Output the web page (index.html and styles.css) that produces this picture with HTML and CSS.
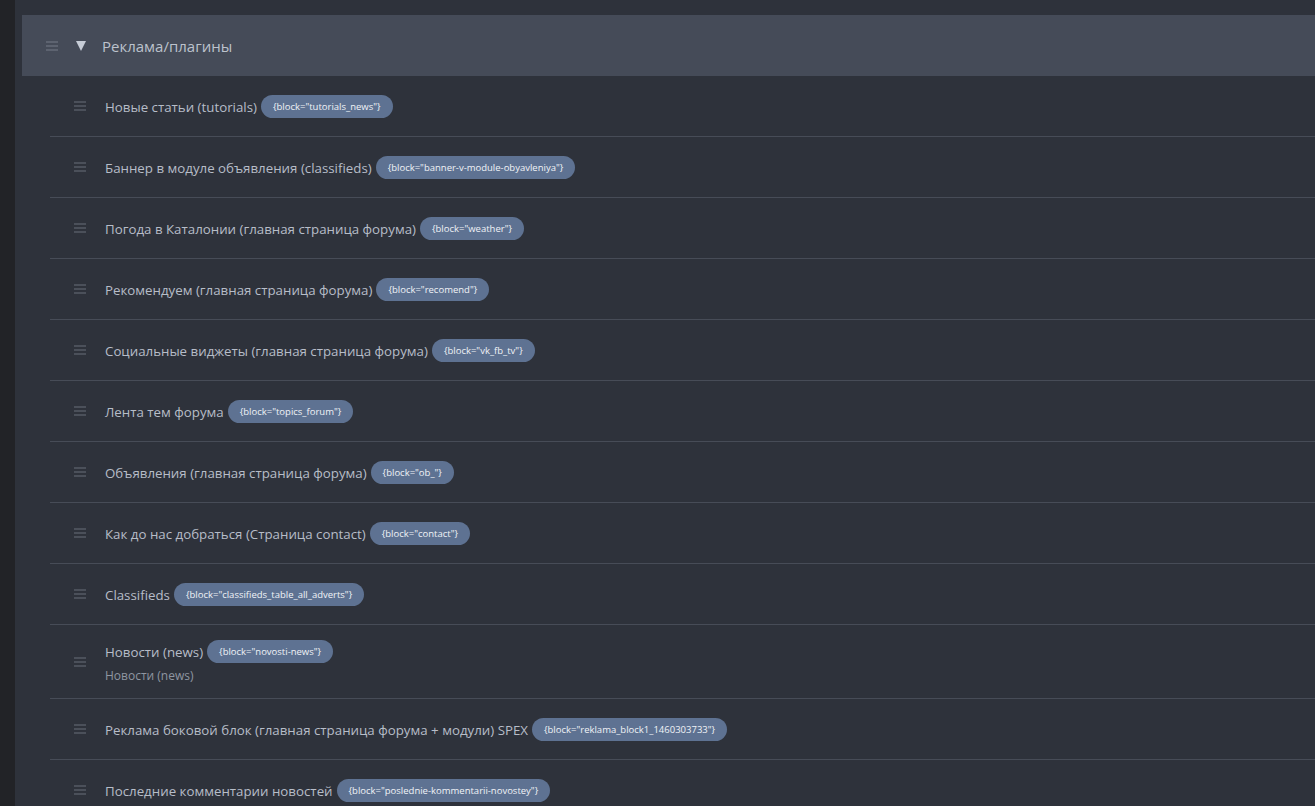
FILE: index.html
```html
<!DOCTYPE html>
<html lang="ru">
<head>
  <meta charset="UTF-8">
  <meta name="viewport" content="width=device-width, initial-scale=1.0">
  <title>Блоки</title>
  <link rel="stylesheet" href="styles.css">
</head>
<body>
  <div class="sidebar"></div>
  <div class="content">
    <div class="group-head">
      <span class="handle"><i></i><i></i><i></i></span>
      <span class="caret"></span>
      <span class="group-title">Реклама/плагины</span>
    </div>
    <ul class="blocks">
      <li class="block-row">
        <span class="handle"><i></i><i></i><i></i></span>
        <div class="block-info">
          <div class="block-line">Новые статьи (tutorials) <span class="tag">{block="tutorials_news"}</span></div>
        </div>
      </li>
      <li class="block-row">
        <span class="handle"><i></i><i></i><i></i></span>
        <div class="block-info">
          <div class="block-line">Баннер в модуле объявления (classifieds) <span class="tag">{block="banner-v-module-obyavleniya"}</span></div>
        </div>
      </li>
      <li class="block-row">
        <span class="handle"><i></i><i></i><i></i></span>
        <div class="block-info">
          <div class="block-line">Погода в Каталонии (главная страница форума) <span class="tag">{block="weather"}</span></div>
        </div>
      </li>
      <li class="block-row">
        <span class="handle"><i></i><i></i><i></i></span>
        <div class="block-info">
          <div class="block-line">Рекомендуем (главная страница форума) <span class="tag">{block="recomend"}</span></div>
        </div>
      </li>
      <li class="block-row">
        <span class="handle"><i></i><i></i><i></i></span>
        <div class="block-info">
          <div class="block-line">Социальные виджеты (главная страница форума) <span class="tag">{block="vk_fb_tv"}</span></div>
        </div>
      </li>
      <li class="block-row">
        <span class="handle"><i></i><i></i><i></i></span>
        <div class="block-info">
          <div class="block-line">Лента тем форума <span class="tag">{block="topics_forum"}</span></div>
        </div>
      </li>
      <li class="block-row">
        <span class="handle"><i></i><i></i><i></i></span>
        <div class="block-info">
          <div class="block-line">Объявления (главная страница форума) <span class="tag">{block="ob_"}</span></div>
        </div>
      </li>
      <li class="block-row">
        <span class="handle"><i></i><i></i><i></i></span>
        <div class="block-info">
          <div class="block-line">Как до нас добраться (Страница contact) <span class="tag">{block="contact"}</span></div>
        </div>
      </li>
      <li class="block-row">
        <span class="handle"><i></i><i></i><i></i></span>
        <div class="block-info">
          <div class="block-line">Classifieds <span class="tag">{block="classifieds_table_all_adverts"}</span></div>
        </div>
      </li>
      <li class="block-row">
        <span class="handle"><i></i><i></i><i></i></span>
        <div class="block-info">
          <div class="block-line">Новости (news) <span class="tag">{block="novosti-news"}</span></div>
          <div class="block-desc">Новости (news)</div>
        </div>
      </li>
      <li class="block-row">
        <span class="handle"><i></i><i></i><i></i></span>
        <div class="block-info">
          <div class="block-line">Реклама боковой блок (главная страница форума + модули) SPEX <span class="tag">{block="reklama_block1_1460303733"}</span></div>
        </div>
      </li>
      <li class="block-row">
        <span class="handle"><i></i><i></i><i></i></span>
        <div class="block-info">
          <div class="block-line">Последние комментарии новостей <span class="tag">{block="poslednie-kommentarii-novostey"}</span></div>
        </div>
      </li>
    </ul>
  </div>
</body>
</html>
```

FILE: styles.css
```css
body {
  margin: 0;
  padding: 0;
  background: #2e323b;
  font-family: "Open Sans", Arial, sans-serif;
  color: #b7bdc8;
  display: flex;
  height: 100vh;
  overflow: hidden;
}

.sidebar {
  width: 15px;
  flex-shrink: 0;
  background: #222327;
}

.content {
  flex: 1;
  padding: 15px 0 0 7px;
}

.group-head {
  height: 61px;
  background: #454b58;
  display: flex;
  align-items: center;
  padding-left: 24px;
}

.handle {
  display: inline-flex;
  flex-direction: column;
  gap: 2px;
  width: 12px;
  flex-shrink: 0;
}

.handle i {
  display: block;
  height: 2px;
  background: #4b505a;
}

.group-head .handle i {
  background: #5d6370;
}

.caret {
  margin-left: 18px;
  width: 0;
  height: 0;
  border-left: 5px solid transparent;
  border-right: 5px solid transparent;
  border-top: 10px solid #c6ccd6;
}

.group-title {
  margin-left: 16px;
  font-size: 15px;
  color: #bcc2cc;
}

.blocks {
  list-style: none;
  margin: 0 0 0 28px;
  padding: 0;
}

.block-row {
  display: flex;
  align-items: center;
  min-height: 60px;
  padding-left: 24px;
  border-bottom: 1px solid #474c57;
}

.block-row .handle {
  margin-right: 19px;
}

.block-info {
  padding: 15px 0 14px;
}

.block-line {
  font-size: 13.3px;
  display: flex;
  align-items: center;
  gap: 4px;
}

.tag {
  display: inline-block;
  background: #5e7292;
  color: #f0f3f7;
  font-size: 9.5px;
  line-height: 23px;
  padding: 0 12px;
  border-radius: 12px;
}

.block-desc {
  font-size: 12px;
  color: #8f96a1;
  margin-top: 4px;
}
```
